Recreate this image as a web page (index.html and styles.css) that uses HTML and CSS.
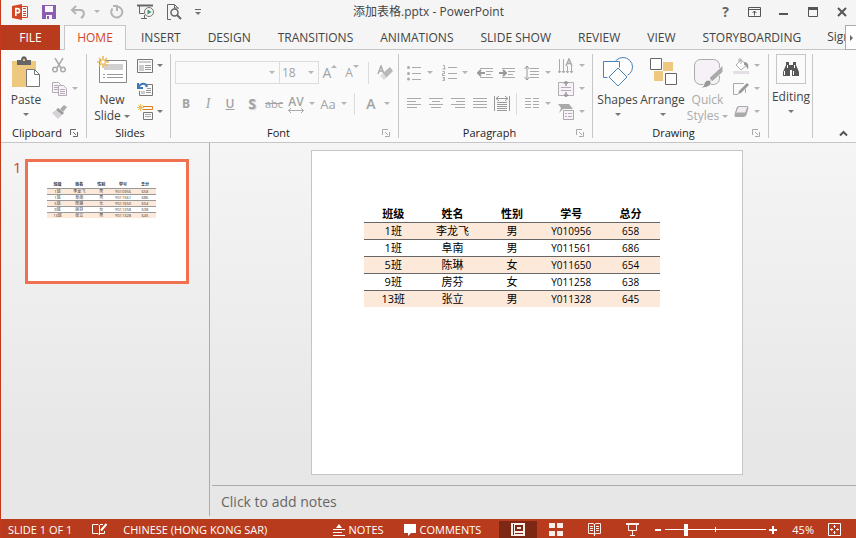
FILE: index.html
```
<!DOCTYPE html>
<html lang="en">
  <head>
    <meta charset="UTF-8" />
    <meta name="viewport" content="width=device-width, initial-scale=1.0" />
    <title>添加表格.pptx - PowerPoint</title>
    <link rel="stylesheet" href="styles.css">
  </head>
  <body>
    <header class="titlebar">
      <div class="quick-access">
        <button class="title-btn" aria-label="PowerPoint">
          <svg width="16" height="16" viewBox="0 0 16 16"><path d="M9 2.500h6.500v11H9" fill="#fff" stroke="#d24726"/><path d="M11 4.500h3M11 7.500h3M11 9.500h3M11 11.500h3" stroke="#d24726"/><path d="M0 2l10-2v16L0 14z" fill="#d24726"/><path d="M3.800 12V4.600h1.700a2 2 0 0 1 0 4.200H3.800" fill="none" stroke="#fff" stroke-width="1.600"/></svg>
        </button>
        <button class="title-btn" aria-label="Save">
          <svg width="14" height="14" viewBox="0 0 14 14"><path d="M0 0h14v14H0z" fill="#8c5cb0"/><path d="M3 1h8v6H3zM4 10h6v4H4z" fill="#f9f7fb"/><path d="M5 11h2v3H5z" fill="#8c5cb0"/></svg>
        </button>
        <button class="title-btn" aria-label="Undo">
          <svg width="16" height="14" viewBox="0 0 16 14" fill="none" stroke="#b4b4b4" stroke-width="2"><path d="M6 1L2 5l4 4M2 5h8c5 0 5 6 1 8"/></svg>
        </button>
        <button class="caret-btn light" aria-label="Undo list"><i class="caret"></i></button>
        <button class="title-btn" aria-label="Redo">
          <svg width="14" height="14" viewBox="0 0 14 14" fill="none" stroke="#b4b4b4" stroke-width="2"><path d="M3 1h4v5M7 1.500a5.500 5.500 0 1 1-4.500 2"/></svg>
        </button>
        <button class="title-btn" aria-label="Start slide show">
          <svg width="18" height="16" viewBox="0 0 18 16" fill="none" stroke="#666"><path d="M0 1.500h16" stroke-width="2"/><path d="M2.500 2v7.500H7M7.500 11v4M4 14.500h6"/><circle cx="12" cy="8" r="4.500" fill="#f5f5f5" stroke="#777"/><path d="M10.500 5.500l4 2.500-4 2.500z" fill="#3a9a6b" stroke="none"/></svg>
        </button>
        <button class="title-btn" aria-label="Print preview">
          <svg width="15" height="16" viewBox="0 0 15 16" fill="none" stroke="#666"><path d="M4 15.500H.5V.5h7l4 4M7.500.5v3.500h4"/><circle cx="7.500" cy="8.500" r="3.500" fill="#f5f5f5" stroke-width="1.500"/><path d="M10 11l4 4" stroke-width="2"/></svg>
        </button>
        <button class="customize" aria-label="Customize toolbar"><i class="bar"></i><i class="caret"></i></button>
      </div>
      <h1 class="title">添加表格.pptx - PowerPoint</h1>
      <div class="window-buttons">
        <button class="title-btn help" aria-label="Help">?</button>
        <button class="title-btn" aria-label="Ribbon display options">
          <svg width="13" height="10" viewBox="0 0 13 10" fill="none" stroke="#555"><path d="M.5.500h12v9H.5zM0 2.500h13M6.500 8.500V4M4.500 6l2-2 2 2"/></svg>
        </button>
        <button class="title-btn" aria-label="Minimize">
          <svg width="10" height="10" viewBox="0 0 10 10"><path d="M0 6h9v2H0z" fill="#555"/></svg>
        </button>
        <button class="title-btn" aria-label="Maximize">
          <svg width="10" height="10" viewBox="0 0 10 10"><path d="M.5 1v8.500h9V1" fill="none" stroke="#555"/><path d="M0 0h10v3H0z" fill="#555"/></svg>
        </button>
        <button class="title-btn" aria-label="Close">
          <svg width="10" height="10" viewBox="0 0 10 10"><path d="M1 1l8 8M9 1L1 9" stroke="#555" stroke-width="2"/></svg>
        </button>
      </div>
    </header>

    <nav class="tabs">
      <button class="file-tab">FILE</button>
      <button class="tab active">HOME</button>
      <button class="tab">INSERT</button>
      <button class="tab">DESIGN</button>
      <button class="tab">TRANSITIONS</button>
      <button class="tab">ANIMATIONS</button>
      <button class="tab">SLIDE SHOW</button>
      <button class="tab">REVIEW</button>
      <button class="tab">VIEW</button>
      <button class="tab">STORYBOARDING</button>
      <a class="sign-in" href="#">Sign</a>
      <button class="tab-scroll" aria-label="More tabs"><i class="caret-right"></i></button>
    </nav>

    <div class="ribbon">
      <section class="group clipboard">
        <div class="group-body">
          <button class="big">
            <svg width="30" height="32" viewBox="0 0 30 32"><path d="M1 5h24v26H1z" fill="#edc87e"/><path d="M6 4h4c0-5 6-5 6 0h4v5H6z" fill="#666"/><path d="M12 3h2v2h-2z" fill="#edc87e"/><path d="M15.500 13.500h8l5 5v12h-13z" fill="#fff" stroke="#777"/><path d="M23.500 13.500v5h5" fill="none" stroke="#777"/></svg>
            <span>Paste</span>
            <i class="caret"></i>
          </button>
          <div class="stack light">
            <button class="split" aria-label="Cut"><span class="ico"><svg width="14" height="15" viewBox="0 0 14 15" fill="none" stroke="#aaa" stroke-width="1.500"><path d="M3 0l6 10M11 0L5 10"/><circle cx="3" cy="11.500" r="2.300"/><circle cx="11" cy="11.500" r="2.300"/></svg></span></button>
            <button class="split" aria-label="Copy"><span class="ico"><svg width="15" height="14" viewBox="0 0 15 14" fill="#f8f3f8" stroke="#b5adb5"><path d="M.5.500h6l2 2v8h-8zM2 3.500h4M2 5.500h4M2 7.500h4"/><path d="M6.500 3.500h5l3 3v7h-8zM8 7.500h5M8 9.500h5M8 11.500h5"/></svg></span><i class="caret"></i></button>
            <button class="split" aria-label="Format painter"><span class="ico"><svg width="15" height="14" viewBox="0 0 15 14"><path d="M12 0l3 2-4 5-3-3z" fill="#aaa"/><path d="M6 3l6 5-2 2-6-5z" fill="#999"/><path d="M4 5l6 5-4 4-6-6z" fill="#d8d0d8"/></svg></span></button>
          </div>
        </div>
        <footer class="group-title"><span>Clipboard</span><button class="launcher dark" aria-label="Clipboard options"><svg width="8" height="8" viewBox="0 0 8 8"><path d="M.5 6V.5H6M3 3l3 3M7.500 3v4.500H3" fill="none" stroke="currentColor"/></svg></button></footer>
      </section>

      <section class="group slides">
        <div class="group-body">
          <button class="big">
            <svg width="30" height="32" viewBox="0 0 30 32"><path d="M2.500 4.500h27v22h-27z" fill="#fff" stroke="#888"/><path d="M7 8h19v6H7z" fill="#d0d0d0"/><path d="M6 18.500h2M10 18.500h16M6 21.500h2M10 21.500h16" stroke="#999"/><path d="M6 0v12M0 6h12M2 2l8 8M10 2l-8 8" stroke="#edbd63" stroke-width="1.700"/><circle cx="6" cy="6" r="2.200" fill="#fff" stroke="#edbd63"/></svg>
            <span>New</span>
            <span class="with-caret">Slide <i class="caret"></i></span>
          </button>
          <div class="stack">
            <button class="split" aria-label="Layout"><span class="ico"><svg width="16" height="14" viewBox="0 0 16 14" fill="none" stroke="#777"><path d="M.5.500h15v13H.5z"/><path d="M2 2h12v2H2zM2 6h5v6H2z" fill="#ccc" stroke="none"/><path d="M8 6.500h6M8 8.500h6M8 10.500h6" stroke="#999"/></svg></span><i class="caret"></i></button>
            <button class="split" aria-label="Reset"><span class="ico"><svg width="16" height="14" viewBox="0 0 16 14" fill="none" stroke="#777"><path d="M7 2.500h8.500v11h-13V9"/><path d="M4 9h4v3H4z" fill="#ccc" stroke="none"/><path d="M10 6.500h4M9 8.500h5M9 10.500h5" stroke="#999"/><path d="M1 1v5h5M1 6c3-6 8-5 9-1" stroke="#3b78b5" stroke-width="2"/></svg></span></button>
            <button class="split" aria-label="Section"><span class="ico"><svg width="16" height="16" viewBox="0 0 16 16" fill="none" stroke="#777"><path d="M6.500 8.500h9v7h-9z"/><path d="M8 10.500h6M8 12.500h6" stroke="#aaa"/><path d="M6 2.500h9.500v3H6" stroke="#e67a1e"/><path d="M3.500 0v7M0 3.500h7M1 1l5 5M6 1L1 6" stroke="#edbd63"/></svg></span><i class="caret"></i></button>
          </div>
        </div>
        <footer class="group-title"><span>Slides</span></footer>
      </section>

      <section class="group font light">
        <div class="rows">
          <div class="row">
            <div class="combo font-name"><input type="text" aria-label="Font" /><i class="caret"></i></div>
            <div class="combo font-size"><input type="text" aria-label="Font size" value="18" /><i class="caret"></i></div>
            <button class="small grow" aria-label="Increase font size">A<i class="caret up"></i></button>
            <button class="small shrink" aria-label="Decrease font size">A<i class="caret"></i></button>
            <span class="divider"></span>
            <button class="small" aria-label="Clear formatting"><svg width="16" height="16" viewBox="0 0 16 16"><path d="M1 9l3-8 3 8M2 6h4" fill="none" stroke="#aaa" stroke-width="1.500"/><path d="M6 8l7-6 3 4-7 7z" fill="#b8b8b8"/><path d="M6 8l3 5-2 2-4-4z" fill="#ddd"/></svg></button>
          </div>
          <div class="row">
            <button class="small bold">B</button>
            <button class="small italic">I</button>
            <button class="small underline">U</button>
            <button class="small shadow">S</button>
            <button class="small strike">abc</button>
            <button class="split" aria-label="Character spacing"><span class="ico spacing">AV<svg width="16" height="5" viewBox="0 0 16 5"><path d="M0 2.500h16M3 0L.5 2.500 3 5M13 0l2.500 2.500L13 5" fill="none" stroke="#aaa"/></svg></span><i class="caret"></i></button>
            <button class="split" aria-label="Change case"><span class="ico case">Aa</span><i class="caret"></i></button>
            <span class="divider"></span>
            <button class="split" aria-label="Font color"><span class="ico color">A</span><i class="caret"></i></button>
          </div>
        </div>
        <footer class="group-title"><span>Font</span><button class="launcher" aria-label="Font options"><svg width="8" height="8" viewBox="0 0 8 8"><path d="M.5 6V.5H6M3 3l3 3M7.500 3v4.500H3" fill="none" stroke="currentColor"/></svg></button></footer>
      </section>

      <section class="group paragraph light">
        <div class="group-body">
          <div class="rows">
            <div class="row spread">
              <button class="split" aria-label="Bullets"><span class="ico"><svg width="14" height="16" viewBox="0 0 14 16"><path d="M5 2.500h9M5 8.500h9M5 14.500h9" stroke="#aaa"/><circle cx="1.500" cy="2.500" r="1.500"/><circle cx="1.500" cy="8.500" r="1.500"/><circle cx="1.500" cy="14" r="1.500"/></svg></span><i class="caret"></i></button>
              <button class="split" aria-label="Numbering"><span class="ico"><svg width="15" height="16" viewBox="0 0 15 16" fill="none" stroke="#aaa"><path d="M6 2.500h9M6 8.500h9M6 13.500h9M1 .5h1.500V4M.5 4h3M.5 6.500h2v2h-2v2H3M.5 12.500h2v3h-2M1 14h1"/></svg></span><i class="caret"></i></button>
              <span class="pair">
                <button class="small" aria-label="Decrease indent"><svg width="16" height="12" viewBox="0 0 16 12" fill="none" stroke="#aaa"><path d="M3 1.500h13M9 4.500h7M9 7.500h5M3 10.500h13"/><path d="M8 6H1M4 3L1 6l3 3" stroke="#999" stroke-width="2"/></svg></button>
                <button class="small" aria-label="Increase indent"><svg width="16" height="12" viewBox="0 0 16 12" fill="none" stroke="#aaa"><path d="M3 1.500h13M9 4.500h7M9 7.500h5M3 10.500h13"/><path d="M0 6h7M4 3l3 3-3 3" stroke="#999" stroke-width="2"/></svg></button>
              </span>
              <button class="split" aria-label="Line spacing"><span class="ico"><svg width="15" height="16" viewBox="0 0 15 16" fill="none" stroke="#aaa"><path d="M6 3.500h9M6 6.500h9M6 9.500h9M6 12.500h9"/><path d="M3 1v14M.5 4L3 1l2.500 3M.5 12L3 15l2.500-3" stroke="#999"/></svg></span><i class="caret"></i></button>
            </div>
            <div class="row">
              <button class="small" aria-label="Align left"><svg width="14" height="11" viewBox="0 0 14 11" stroke="#aaa"><path d="M0 .5h14M0 3.500h9M0 6.500h14M0 9.500h10"/></svg></button>
              <button class="small" aria-label="Center"><svg width="14" height="11" viewBox="0 0 14 11" stroke="#aaa"><path d="M0 .5h14M3 3.500h8M0 6.500h14M2 9.500h10"/></svg></button>
              <button class="small" aria-label="Align right"><svg width="14" height="11" viewBox="0 0 14 11" stroke="#aaa"><path d="M0 .5h14M5 3.500h9M0 6.500h14M4 9.500h10"/></svg></button>
              <button class="small" aria-label="Justify"><svg width="14" height="11" viewBox="0 0 14 11" stroke="#aaa"><path d="M0 .5h14M0 3.500h14M0 6.500h14M0 9.500h14"/></svg></button>
              <button class="small" aria-label="Distributed"><svg width="16" height="15" viewBox="0 0 16 15" fill="none" stroke="#999"><path d="M.5 0v15M15.500 0v15M3 6.500h10M3 8.500h10M3 10.500h10M3 12.500h10M3 14.500h10M2 2.500h12M5 0L2 2.500 5 5M11 0l3 2.500L11 5"/></svg></button>
              <span class="divider narrow"></span>
              <button class="split" aria-label="Columns"><span class="ico"><svg width="14" height="11" viewBox="0 0 14 11" stroke="#aaa"><path d="M0 .5h6M0 3.500h6M0 6.500h6M0 9.500h6M8 .5h6M8 3.500h6M8 6.500h6M8 9.500h6"/></svg></span><i class="caret"></i></button>
            </div>
          </div>
          <div class="stack">
            <button class="split" aria-label="Text direction"><span class="ico"><svg width="16" height="16" viewBox="0 0 16 16" fill="none" stroke="#aaa"><path d="M1.500 1v14M5.500 1v14M9.500 8v7M13.500 8v7M0 13l1.500 2L3 13M4 13l1.500 2L7 13M8 13l1.500 2 1.500-2M12 13l1.500 2 1.500-2"/><path d="M8 8l3-7 3 7M9 5.500h4" stroke-width="1.500"/></svg></span><i class="caret"></i></button>
            <button class="split" aria-label="Align text"><span class="ico"><svg width="16" height="16" viewBox="0 0 16 16" fill="#f8f3f8" stroke="#b5adb5"><path d="M.5 1.500h15v13H.5z"/><path d="M3 6.500h10M3 9.500h10"/><path d="M8 0v5M6 2.500L8 .5l2 2M8 11v5M6 13.500l2 2 2-2" fill="none" stroke="#999" stroke-width="1.500"/></svg></span><i class="caret"></i></button>
            <button class="split" aria-label="Convert to SmartArt"><span class="ico"><svg width="16" height="16" viewBox="0 0 16 16"><path d="M0 0h11l4 5H5l-4 4 2-5z" fill="#aaa"/><path d="M5.500 6.500h10v9h-10z" fill="#f8f3f8" stroke="#aaa"/><path d="M7 9.500h2M10 9.500h4M7 12.500h2M10 12.500h4" stroke="#b5adb5"/></svg></span><i class="caret"></i></button>
          </div>
        </div>
        <footer class="group-title"><span>Paragraph</span><button class="launcher" aria-label="Paragraph options"><svg width="8" height="8" viewBox="0 0 8 8"><path d="M.5 6V.5H6M3 3l3 3M7.500 3v4.500H3" fill="none" stroke="currentColor"/></svg></button></footer>
      </section>

      <section class="group drawing">
        <div class="group-body">
          <button class="big">
            <svg width="30" height="32" viewBox="0 0 30 32" fill="#fff" stroke="#4a81b8"><circle cx="20" cy="11" r="9.500"/><path d="M.5 5.500h16v16H.5z"/><path d="M15 12l9 9-9 9-9-9z" stroke="#fafafa" stroke-width="3"/><path d="M15 12l9 9-9 9-9-9z"/></svg>
            <span>Shapes</span>
            <i class="caret"></i>
          </button>
          <button class="big">
            <svg width="28" height="32" viewBox="0 0 28 32"><path d="M14 6h10v9H14zM5 15h9v10H5z" fill="#edc87e"/><path d="M1.500 2.500h11v11h-11zM16.500 17.500h11v11h-11z" fill="#fff" stroke="#666"/></svg>
            <span>Arrange</span>
            <i class="caret"></i>
          </button>
          <button class="big light">
            <svg width="30" height="32" viewBox="0 0 30 32"><rect x="1.500" y="3.500" width="25" height="25" rx="6" fill="#f6f1f6" stroke="#aaa"/><path d="M30 9v7L19 26l-3-4z" fill="#aaa" stroke="#fafafa"/><path d="M8 32c4-2 2-7 7-8 5 0 5 8-7 8z" fill="#999" stroke="#fafafa"/></svg>
            <span>Quick</span>
            <span class="with-caret">Styles <i class="caret"></i></span>
          </button>
          <div class="stack light">
            <button class="split" aria-label="Shape fill"><span class="ico"><svg width="16" height="16" viewBox="0 0 16 16"><path d="M0 13h16v3H0z" fill="#e4dfe4"/><path d="M8 2l6 5-6 5-5-5zM6 4V1h2v5" fill="#fff" stroke="#aaa"/><path d="M11 4c4 0 5 3 4 7-2-1-1-4-4-4z" fill="#999"/></svg></span><i class="caret"></i></button>
            <button class="split" aria-label="Shape outline"><span class="ico"><svg width="16" height="14" viewBox="0 0 16 14"><path d="M11 1.500H.5v11H5M12.500 7v4" fill="none" stroke="#aaa"/><path d="M14 1l2 2-8 8-3 1 1-3z" fill="#999"/></svg></span><i class="caret"></i></button>
            <button class="split" aria-label="Shape effects"><span class="ico"><svg width="15" height="13" viewBox="0 0 15 13"><path d="M5 1h8q2 0 1.500 2l-2 7q-1 2-3 2H2q-2 0-1.500-2l2-7Q3 1 5 1z" fill="#aaa"/><path d="M5.500 1.500h7q1 0 1 1l-2 5.500h-10l2-5q1-1.500 2-1.500z" fill="#f1ebf1" stroke="#aaa"/></svg></span><i class="caret"></i></button>
          </div>
        </div>
        <footer class="group-title"><span>Drawing</span><button class="launcher" aria-label="Drawing options"><svg width="8" height="8" viewBox="0 0 8 8"><path d="M.5 6V.5H6M3 3l3 3M7.500 3v4.500H3" fill="none" stroke="currentColor"/></svg></button></footer>
      </section>

      <section class="group editing">
        <button class="big">
          <span class="frame"><svg width="16" height="14" viewBox="0 0 16 14" fill="#555"><path d="M3 0h3v3h4V0h3v3l3 7v4H9V8H7v6H0v-4l3-7z"/><path d="M1 9h1v4H1zM10 9h1v4h-1zM4 3h1v3H4zM11 3h1v3h-1z" fill="#fff"/></svg></span>
          <span>Editing</span>
          <i class="caret"></i>
        </button>
      </section>
      <button class="collapse" aria-label="Collapse the ribbon"><svg width="9" height="7" viewBox="0 0 9 7"><path d="M1 5.500L4.500 2 8 5.500" fill="none" stroke="#555" stroke-width="2"/></svg></button>
    </div>

    <main class="workspace">
      <aside class="thumbnails">
        <span class="slide-number">1</span>
        <a class="thumb" href="#slide" aria-label="Slide 1">
          <table class="scores">
            <thead>
              <tr><th>班级</th><th>姓名</th><th>性别</th><th>学号</th><th>总分</th></tr>
            </thead>
            <tbody>
              <tr><td>1班</td><td>李龙飞</td><td>男</td><td>Y010956</td><td>658</td></tr>
              <tr><td>1班</td><td>阜南</td><td>男</td><td>Y011561</td><td>686</td></tr>
              <tr><td>5班</td><td>陈琳</td><td>女</td><td>Y011650</td><td>654</td></tr>
              <tr><td>9班</td><td>房芬</td><td>女</td><td>Y011258</td><td>638</td></tr>
              <tr><td>13班</td><td>张立</td><td>男</td><td>Y011328</td><td>645</td></tr>
            </tbody>
          </table>
        </a>
      </aside>
      <div class="editor">
        <div class="stage">
          <article class="slide" id="slide">
            <table class="scores">
              <thead>
                <tr><th>班级</th><th>姓名</th><th>性别</th><th>学号</th><th>总分</th></tr>
              </thead>
              <tbody>
                <tr><td>1班</td><td>李龙飞</td><td>男</td><td class="num">Y010956</td><td class="num">658</td></tr>
                <tr><td>1班</td><td>阜南</td><td>男</td><td class="num">Y011561</td><td class="num">686</td></tr>
                <tr><td>5班</td><td>陈琳</td><td>女</td><td class="num">Y011650</td><td class="num">654</td></tr>
                <tr><td>9班</td><td>房芬</td><td>女</td><td class="num">Y011258</td><td class="num">638</td></tr>
                <tr><td>13班</td><td>张立</td><td>男</td><td class="num">Y011328</td><td class="num">645</td></tr>
              </tbody>
            </table>
          </article>
        </div>
        <textarea class="notes" rows="1" aria-label="Notes" placeholder="Click to add notes"></textarea>
      </div>
    </main>

    <footer class="statusbar">
      <span class="slide-count">SLIDE 1 OF 1</span>
      <button class="proof" aria-label="Spelling"><svg width="16" height="13" viewBox="0 0 16 13" fill="none" stroke="#fff"><path d="M7 2.500L6 1.500H.5v9H6l1 1 1-1h2M7.500 2v10M8 1.500h3M12.500 8v2.500H10"/><path d="M14.500 1L9 7.500" stroke-width="2"/></svg></button>
      <button class="language">CHINESE (HONG KONG SAR)</button>
      <div class="status-right">
        <button class="status-btn notes-btn"><svg width="12" height="12" viewBox="0 0 12 12"><path d="M6 0l3 4H3z" fill="#fff"/><path d="M0 5.500h12M0 8.500h9M0 11.500h12" stroke="#fff"/></svg>NOTES</button>
        <button class="status-btn comments-btn"><svg width="12" height="12" viewBox="0 0 12 12"><path d="M0 0h12v9H7l-3 3V9H0z" fill="#fff"/></svg>COMMENTS</button>
        <button class="view active" aria-label="Normal view"><svg width="14" height="13" viewBox="0 0 14 13"><path d="M0 0h14v13H0z" fill="#fbeee9"/><path d="M2 1h1v11H2zM4 2h8v6H4zM4 10h8v1H4z" fill="#7d2815"/><path d="M6 4h4v2H6z" fill="#fbeee9"/></svg></button>
        <button class="view" aria-label="Slide sorter"><svg width="14" height="13" viewBox="0 0 14 13" fill="#fbeee9"><path d="M0 0h6v5H0zM8 0h6v5H8zM0 8h6v5H0zM8 8h6v5H8z"/></svg></button>
        <button class="view" aria-label="Reading view"><svg width="13" height="13" viewBox="0 0 13 13" fill="none" stroke="#fbeee9"><path d="M.5.500H5l1.500 1L8 .500h4.500v10H8l-1.500 1-1.500-1H.5zM6.500 1v12M2 3.500h3M2 5.500h3M2 7.500h3M8 3.500h3M8 5.500h3M8 7.500h3"/></svg></button>
        <button class="view" aria-label="Slide show"><svg width="13" height="13" viewBox="0 0 13 13" fill="none" stroke="#fbeee9"><path d="M0 1h13" stroke-width="2"/><path d="M2.500 2v5.500h8V2M6.500 8v4M4 12.500h5"/></svg></button>
        <button class="zoom-btn" aria-label="Zoom out"><svg width="8" height="8" viewBox="0 0 8 8"><path d="M1 3h6v2H1z" fill="#fff"/></svg></button>
        <input class="zoom" type="range" aria-label="Zoom" min="0" max="100" value="19" />
        <button class="zoom-btn" aria-label="Zoom in"><svg width="8" height="8" viewBox="0 0 8 8"><path d="M0 3h3V0h2v3h3v2H5v3H3V5H0z" fill="#fff"/></svg></button>
        <button class="zoom-value">45%</button>
        <button class="fit" aria-label="Fit slide to window"><svg width="13" height="13" viewBox="0 0 13 13" fill="none" stroke="#fff"><path d="M.5.500h12v12H.5z"/><path d="M6.500 2v3M6.500 8v3M2 6.500h3M8 6.500h3M5.500 3.500h2M5.500 9.500h2M3.500 5.500v2M9.500 5.500v2"/></svg></button>
      </div>
    </footer>
  </body>
</html>
```
FILE: styles.css
```
* {
  box-sizing: border-box;
}
body {
  display: flex;
  flex-direction: column;
  height: 100vh;
  margin: 0;
  overflow: hidden;
  border-left: 1px solid #c23a1c;
  background: #f5f5f5;
  color: #444;
  font-family: "Open Sans", "Noto Sans CJK SC", sans-serif;
  font-size: 12px;
  line-height: 16px;
}
button,
input,
textarea {
  margin: 0;
  padding: 0;
  border: none;
  background: none;
  color: inherit;
  font: inherit;
}
button {
  flex: none;
  white-space: nowrap;
}
svg {
  display: block;
  flex: none;
}

/* small drop-down triangles */
.caret {
  flex: none;
  border: 3px solid transparent;
  border-top-color: #777;
  border-bottom: none;
}
.light .caret {
  border-top-color: #b4b4b4;
}
.caret-right {
  border: 3px solid transparent;
  border-left-color: #666;
  border-right: none;
}

/* title bar */
.titlebar {
  display: grid;
  grid-template-columns: 1fr auto 1fr;
  align-items: center;
  height: 25px;
  padding-bottom: 2px;
}
.quick-access,
.window-buttons {
  display: flex;
  align-items: center;
}
.quick-access {
  padding-left: 4px;
}
.window-buttons {
  justify-content: flex-end;
}
.title-btn {
  display: flex;
  align-items: center;
  justify-content: center;
  width: 29px;
  height: 22px;
}
.caret-btn {
  display: flex;
  justify-content: center;
  width: 10px;
}
.customize {
  display: flex;
  flex-direction: column;
  align-items: center;
  gap: 2px;
  width: 18px;
}
.bar {
  width: 6px;
  height: 1px;
  background: #666;
}
.title {
  margin: 0;
  font-size: 12px;
  font-weight: normal;
}
.help {
  font-size: 14px;
  font-weight: bold;
  color: #666;
}

/* tabs */
.tabs {
  display: flex;
  height: 25px;
  border-bottom: 1px solid #c6c6c6;
}
.file-tab {
  width: 59px;
  height: 25px;
  margin-right: 4px;
  background: #b83b1d;
  color: #fff;
}
.tab {
  padding: 1px 14px 0 13px;
}
.tab.active {
  width: 62px;
  height: 25px;
  margin-right: 2px;
  padding: 0;
  border: 1px solid #c6c6c6;
  border-bottom: none;
  background: #fafafa;
  color: #d24726;
}
.sign-in {
  flex: 1;
  min-width: 0;
  overflow: hidden;
  padding-left: 12px;
  line-height: 24px;
  white-space: nowrap;
  color: inherit;
  text-decoration: none;
}
.tab-scroll {
  display: flex;
  align-items: center;
  justify-content: center;
  width: 11px;
  height: 25px;
  border: 1px solid #ababab;
  border-right: none;
  background: #fff;
}

/* ribbon */
.ribbon {
  display: flex;
  flex: none;
  height: 93px;
  padding: 4px 0 1px;
  border-bottom: 1px solid #c6c6c6;
  background: #fafafa;
}
.group {
  display: flex;
  flex: none;
  flex-direction: column;
  justify-content: space-between;
  padding: 0 1px 0 2px;
  background: linear-gradient(#c6c6c6, #c6c6c6) right top / 1px 84px no-repeat;
}
.clipboard {
  width: 86px;
  padding-left: 3px;
}
.slides {
  width: 84px;
  padding-left: 3px;
}
.font {
  width: 228px;
  padding-left: 4px;
}
.paragraph {
  width: 194px;
  padding-left: 4px;
}
.drawing {
  width: 176px;
}
.editing {
  width: 44px;
  padding: 0;
}
.group-body {
  display: flex;
}
.paragraph .group-body {
  gap: 2px;
}
.group-title {
  display: flex;
  align-items: center;
  height: 16px;
  font-size: 11px;
  color: #222;
}
.group-title span {
  flex: 1;
  text-align: center;
}
.launcher {
  width: 16px;
  color: #aaa;
}
.launcher.dark {
  color: #666;
}
.big {
  display: flex;
  flex-direction: column;
  align-items: center;
  width: 45px;
  padding-top: 2px;
}
.clipboard .big,
.slides .big {
  width: 44px;
}
.big svg {
  margin-bottom: 4px;
}
.big > .caret {
  margin-top: 5px;
}
.big.light {
  color: #aaa;
}
.with-caret {
  display: flex;
  align-items: center;
  gap: 3px;
}
.frame {
  display: flex;
  align-items: center;
  justify-content: center;
  width: 30px;
  height: 30px;
  margin-bottom: 5px;
  border: 1px solid #c6c6c6;
}
.frame svg {
  margin: 0;
}
.editing .big {
  width: auto;
  padding: 0;
}
.stack {
  display: flex;
  flex-direction: column;
}
.split {
  display: flex;
  align-items: center;
  width: 32px;
  height: 23px;
}
.slides .split {
  width: 30px;
}
.ico {
  display: flex;
  flex: none;
  align-items: center;
  justify-content: center;
  width: 22px;
}
.split .caret {
  margin: 0 2px;
}
.slides .split .caret {
  margin: 0 1px;
}
.small {
  display: flex;
  align-items: center;
  justify-content: center;
  width: 22px;
  height: 23px;
}
.rows {
  display: flex;
  flex-direction: column;
  gap: 8px;
  padding-top: 7px;
}
.row {
  display: flex;
  align-items: center;
  height: 23px;
}
.spread {
  justify-content: space-between;
}
.pair {
  display: flex;
}
.divider {
  width: 1px;
  height: 22px;
  margin: 0 5px;
  background: #dcdcdc;
}
.divider.narrow {
  margin: 0 4px 0 3px;
}
.rows svg {
  fill: #aaa;
}
.rows svg[fill="none"] {
  fill: none;
}
.font {
  color: #a3a3a3;
}
.combo {
  display: flex;
  align-items: center;
  height: 23px;
  padding: 0 4px;
  border: 1px solid #dcdcdc;
}
.combo input {
  flex: 1;
  min-width: 0;
}
.font-name {
  width: 105px;
}
.font-size {
  width: 39px;
  padding-left: 2px;
  border-left: none;
}
.grow,
.shrink {
  align-items: flex-start;
}
.grow {
  font-size: 14px;
  line-height: 24px;
}
.shrink {
  line-height: 24px;
}
.grow .caret,
.shrink .caret {
  margin-top: 4px;
}
.caret.up {
  border-top: none;
  border-bottom: 3px solid #b4b4b4;
}
.bold {
  font-weight: bold;
}
.italic {
  font-family: "Liberation Serif", serif;
  font-size: 14px;
  font-style: italic;
}
.underline {
  font-weight: 600;
  text-decoration: underline;
}
.shadow {
  font-size: 14px;
  font-weight: bold;
  text-shadow: 1px 1px 1px #ccc;
}
.strike {
  font-size: 11px;
  text-decoration: line-through;
}
.spacing {
  flex-direction: column;
  font-weight: 600;
  line-height: 13px;
}
.case {
  font-size: 13px;
}
.color {
  font-size: 14px;
  font-weight: 600;
}
.collapse {
  align-self: flex-end;
  margin-left: auto;
  padding: 4px 8px 4px 4px;
}

/* workspace */
.workspace {
  display: flex;
  flex: 1;
  min-height: 0;
  background: linear-gradient(#f5f5f5, #e7e7e7 80%);
}
.thumbnails {
  display: flex;
  align-items: flex-start;
  gap: 3px;
  width: 209px;
  margin-bottom: 3px;
  padding: 16px 20px 0 12px;
  border-right: 1px solid #ababab;
}
.slide-number {
  color: #d24726;
  font-size: 15px;
}
.thumb {
  flex: 1;
  aspect-ratio: 164 / 125;
  border: 3px solid #f07050;
  background: #fff;
  color: #333;
  text-decoration: none;
}
.editor {
  display: flex;
  flex: 1;
  flex-direction: column;
  min-width: 0;
  padding-left: 2px;
}
.stage {
  display: flex;
  flex: 1;
  justify-content: center;
  min-height: 0;
  padding: 7px 14px 10px 0;
}
.slide {
  aspect-ratio: 432 / 325;
  height: 100%;
  border: 1px solid #c6c6c6;
  background: #fff;
  color: #000;
}
.notes {
  display: block;
  height: 34px;
  padding: 7px 9px 0;
  border-top: 1px solid #ababab;
  outline: none;
  resize: none;
  overflow: hidden;
  font-size: 14px;
  line-height: 18px;
}
.notes::placeholder {
  color: #666;
}

/* score table */
.scores {
  width: 69%;
  margin: 54px 0 0 12%;
  table-layout: fixed;
  border-collapse: collapse;
  font-size: 11px;
  line-height: 16px;
  text-align: center;
}
.scores th,
.scores td {
  padding: 0;
  white-space: nowrap;
}
.scores th {
  line-height: 17px;
}
.scores tbody tr {
  border-top: 1px solid #666;
}
.scores tbody tr:nth-child(odd) {
  background: #fde9d9;
}
.scores .num {
  font-size: 10px;
}
.thumb .scores {
  margin-top: 20px;
  font-size: 4px;
  line-height: 5px;
}
.thumb .scores th {
  line-height: 6px;
}
.thumb .scores tbody tr {
  border-top-color: #999;
}

/* status bar */
.statusbar {
  display: flex;
  flex: none;
  align-items: center;
  height: 19px;
  padding: 2px 15px 0 7px;
  background: #b83b1d;
  color: #fff;
  font-size: 11px;
}
.proof {
  margin: 0 15px 0 20px;
}
.status-right {
  display: flex;
  align-items: center;
  height: 100%;
  margin-left: auto;
}
.status-btn {
  display: flex;
  align-items: center;
  gap: 4px;
}
.notes-btn {
  margin-right: 20px;
}
.comments-btn {
  margin-right: 18px;
}
.view {
  display: flex;
  align-items: center;
  justify-content: center;
  width: 38px;
  height: 100%;
}
.view.active {
  background: #7d2815;
}
.zoom-btn {
  padding: 0 3px;
}
.zoom {
  width: 101px;
  height: 15px;
  appearance: none;
  background:
    linear-gradient(#fff, #fff) center / 1px 5px no-repeat,
    linear-gradient(#fff, #fff) center / 100% 1px no-repeat;
}
.zoom::-webkit-slider-thumb {
  appearance: none;
  width: 4px;
  height: 12px;
  background: #fff;
}
.zoom-value {
  margin: 0 14px 0 12px;
}
```
